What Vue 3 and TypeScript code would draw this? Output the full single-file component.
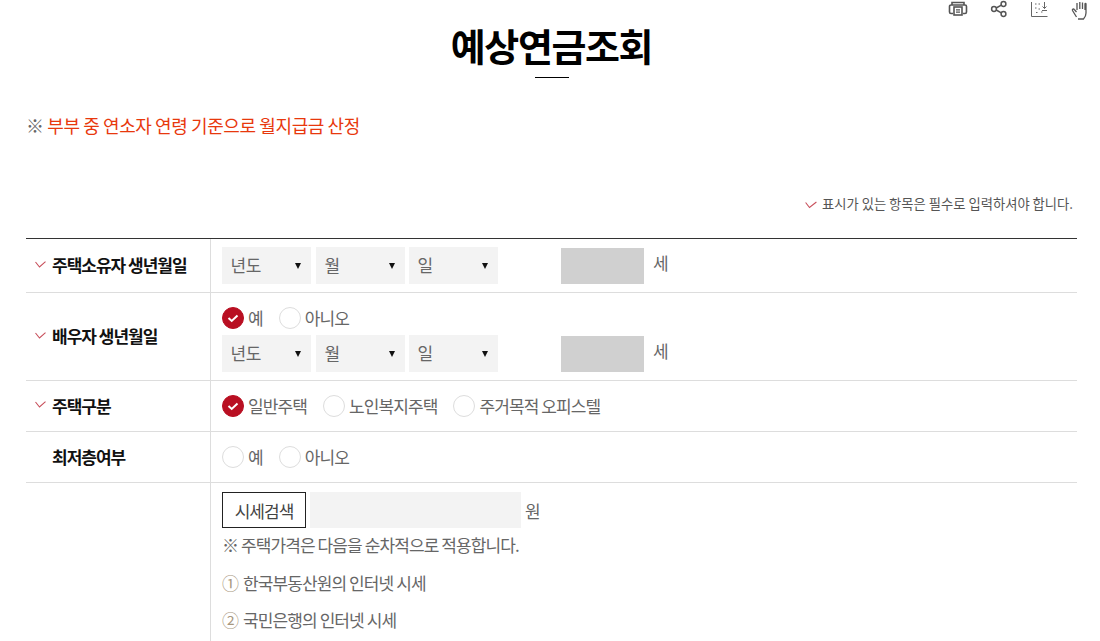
<script setup lang="ts">
const dateParts = ['년도', '월', '일']
const types = ['일반주택', '노인복지주택', '주거목적 오피스텔']
</script>

<template>
  <div class="page">
    <div class="tools">
      <svg class="tool" viewBox="0 0 20 16" width="20" height="16" fill="none" stroke="#555" stroke-width="1.600">
        <path d="M5 13.500H3A1.500 1.500 0 0 1 1.500 12V6.500A1.500 1.500 0 0 1 3 5h14a1.500 1.500 0 0 1 1.500 1.500V12a1.500 1.500 0 0 1-1.500 1.500h-2" />
        <path d="M4 5V2.500h12V5" />
        <rect x="6" y="7" width="8" height="8" />
        <path d="M8 9.800h4M8 12.200h4" stroke-width="1.200" />
      </svg>
      <svg class="tool" viewBox="0 0 18 18" width="18" height="18" fill="none" stroke="#555" stroke-width="1.500">
        <circle cx="4" cy="9" r="2.400" />
        <circle cx="13.500" cy="4" r="2.400" />
        <circle cx="13.500" cy="14" r="2.400" />
        <path d="M6.200 8 11.300 5.200M6.200 10l5.100 2.800" />
      </svg>
      <svg class="tool" viewBox="0 0 18 18" width="18" height="18" fill="none" stroke="#666" stroke-width="1">
        <path d="M1.500 2v14.500H17.500M5 4h1.500M8.500 4H10M5 8h1.500M8.500 9H10M11 12h1.500M6 12.500h1.500" />
        <path d="M14.500 2v6.500M12.500 6.500l2 2 2-2M12 10.500h5" />
      </svg>
      <svg class="tool" viewBox="0 0 18 20" width="18" height="20" fill="none" stroke="#555" stroke-width="1.300">
        <path d="M6.500 17 2.500 10.500c-.6-1.300 1-2 1.800-1L6.500 12M7 10V3M9.800 9V2M12.500 9V2.500M15 10V4c0-.8 1-.8 1 0v9c0 2.500-1 4.500-2.500 6H8" />
      </svg>
    </div>

    <h1 class="title">예상연금조회</h1>
    <div class="title-rule"></div>

    <p class="notice"><span class="notice-mark">※</span> 부부 중 연소자 연령 기준으로 월지급금 산정</p>

    <p class="required-note">
      <svg class="check" viewBox="0 0 12 8" width="12" height="8" fill="none" stroke="#c8505c" stroke-width="1.100"><path d="M.6 1.500 4.500 6.500 11.400 1" /></svg>
      표시가 있는 항목은 필수로 입력하셔야 합니다.
    </p>

    <div class="form">
      <div class="row row-owner">
        <div class="label">
          <svg class="check" viewBox="0 0 11 7" width="11" height="7" fill="none" stroke="#c8505c" stroke-width="1.100"><path d="M.5 1 4.500 6 10.500 .6" /></svg>
          주택소유자 생년월일
        </div>
        <div class="field">
          <div class="date-line">
            <div v-for="p in dateParts" :key="p" class="select">{{ p }}<span class="arrow"></span></div>
            <div class="age"></div>
            <span class="unit">세</span>
          </div>
        </div>
      </div>

      <div class="row row-spouse">
        <div class="label">
          <svg class="check" viewBox="0 0 11 7" width="11" height="7" fill="none" stroke="#c8505c" stroke-width="1.100"><path d="M.5 1 4.500 6 10.500 .6" /></svg>
          배우자 생년월일
        </div>
        <div class="field">
          <div class="radios">
            <label class="radio"><span class="dot on"><svg viewBox="0 0 22 22" width="22" height="22" fill="none" stroke="#fff" stroke-width="2"><path d="m6.500 11 3.200 3 5.800-5.500" /></svg></span>예</label>
            <label class="radio"><span class="dot"></span>아니오</label>
          </div>
          <div class="date-line">
            <div v-for="p in dateParts" :key="p" class="select">{{ p }}<span class="arrow"></span></div>
            <div class="age"></div>
            <span class="unit">세</span>
          </div>
        </div>
      </div>

      <div class="row row-plain">
        <div class="label">
          <svg class="check" viewBox="0 0 11 7" width="11" height="7" fill="none" stroke="#c8505c" stroke-width="1.100"><path d="M.5 1 4.500 6 10.500 .6" /></svg>
          주택구분
        </div>
        <div class="field">
          <div class="radios">
            <label v-for="(t, i) in types" :key="t" class="radio">
              <span class="dot" :class="{ on: i === 0 }"><svg v-if="i === 0" viewBox="0 0 22 22" width="22" height="22" fill="none" stroke="#fff" stroke-width="2"><path d="m6.500 11 3.200 3 5.800-5.500" /></svg></span>{{ t }}
            </label>
          </div>
        </div>
      </div>

      <div class="row row-plain">
        <div class="label no-check">최저층여부</div>
        <div class="field">
          <div class="radios">
            <label class="radio"><span class="dot"></span>예</label>
            <label class="radio"><span class="dot"></span>아니오</label>
          </div>
        </div>
      </div>

      <div class="row row-price">
        <div class="label"></div>
        <div class="field">
          <div class="price-line">
            <button class="search" type="button">시세검색</button>
            <div class="price-input"></div>
            <span class="won">원</span>
          </div>
          <p class="desc first">※ 주택가격은 다음을 순차적으로 적용합니다.</p>
          <p class="desc"><span class="num">①</span> 한국부동산원의 인터넷 시세</p>
          <p class="desc"><span class="num">②</span> 국민은행의 인터넷 시세</p>
        </div>
      </div>
    </div>
  </div>
</template>

<style>
html, body { margin: 0; height: 641px; overflow: hidden; background: #fff; }
</style>

<style scoped>
.page {
  box-sizing: border-box;
  width: 1100px;
  height: 641px;
  overflow: hidden;
  padding: 0 23px 0 26px;
  position: relative;
  font-family: "Noto Sans CJK KR", "Noto Sans", sans-serif;
  color: #555;
}
.tools {
  position: absolute;
  top: 0;
  right: 12px;
  display: flex;
  gap: 22px;
  align-items: flex-start;
}
.title {
  margin: 0;
  padding-top: 19px;
  height: 53px;
  line-height: 52px;
  text-align: center;
  font-size: 38px;
  font-weight: 700;
  letter-spacing: -1.400px;
  color: #000;
}
.title-rule {
  width: 34px;
  height: 1px;
  background: #000;
  margin: 5px auto 0 auto;
}
.notice {
  margin: 35px 0 0;
  height: 25px;
  line-height: 25px;
  font-size: 18px;
  letter-spacing: -0.4px;
  color: #e8380d;
}
.notice-mark { color: #666; }
.required-note {
  margin: 56px 0 0;
  height: 20px;
  line-height: 20px;
  text-align: right;
  padding-right: 4px;
  font-size: 13.300px;
  color: #555;
}
.required-note .check { margin-right: 2px; vertical-align: 0; }
.form {
  margin-top: 24px;
  border-top: 1px solid #333;
}
.row {
  display: grid;
  grid-template-columns: 184px 1fr;
  border-bottom: 1px solid #ddd;
}
.row-owner { height: 53px; }
.row-spouse { height: 87px; }
.row-plain { height: 50px; }
.label {
  display: flex;
  align-items: center;
  padding-left: 26px;
  padding-bottom: 2px;
  position: relative;
  font-size: 17px;
  font-weight: 700;
  letter-spacing: -1px;
  color: #111;
}
.label .check { position: absolute; left: 9px; top: 50%; margin-top: -5px; }
.field {
  border-left: 1px solid #ddd;
  padding-left: 11px;
  display: flex;
  flex-direction: column;
  justify-content: center;
  font-size: 17px;
  letter-spacing: -0.9px;
}
.date-line {
  display: flex;
  align-items: center;
  height: 37px;
}
.select {
  box-sizing: border-box;
  width: 89px;
  height: 37px;
  line-height: 36px;
  padding-left: 8.500px;
  background: #f3f3f3;
  position: relative;
  color: #666;
  font-size: 17px;
  letter-spacing: -0.4px;
  margin-right: 5px;
}
.select:nth-child(2) { margin-right: 4px; }
.arrow {
  position: absolute;
  right: 10px;
  top: 16px;
  width: 0;
  height: 0;
  border-left: 3px solid transparent;
  border-right: 3px solid transparent;
  border-top: 6px solid #111;
}
.age {
  width: 83px;
  height: 36px;
  background: #d0d0d0;
  margin-left: 58px;
  align-self: flex-end;
}
.unit { margin-left: 9px; color: #666; margin-top: -6px; }
.radios { display: flex; align-items: center; gap: 16px; height: 28px; }
.radio { display: flex; align-items: center; gap: 4px; color: #666; margin-bottom: 2px; }
.dot {
  box-sizing: border-box;
  width: 22px;
  height: 22px;
  margin-top: 2px;
  border-radius: 50%;
  border: 1px solid #ddd;
  background: #fff;
  display: block;
  position: relative;
}
.dot svg { position: absolute; left: -1px; top: -1px; }
.dot.on { background: #b90f22; border-color: #b90f22; }
.row-spouse .field { justify-content: flex-start; padding-top: 11px; }
.row-spouse .date-line { margin-top: 3px; }
.row-price { border-bottom: 0; height: 158px; }
.row-price .field { justify-content: flex-start; padding-top: 9px; }
.price-line { display: flex; align-items: center; height: 36px; }
.search {
  box-sizing: border-box;
  width: 84px;
  height: 36px;
  border: 1px solid #222;
  background: #fff;
  font: inherit;
  letter-spacing: -1px;
  color: #444;
  padding: 0;
}
.price-input { width: 211px; height: 36px; background: #f3f3f3; margin-left: 4px; }
.won { margin-left: 4px; color: #666; }
.desc { margin: 0; height: 37px; line-height: 37px; color: #666; }
.desc.first { margin-top: -2px; height: 38px; }
.num { color: #a89880; margin-right: 2px; }
</style>
